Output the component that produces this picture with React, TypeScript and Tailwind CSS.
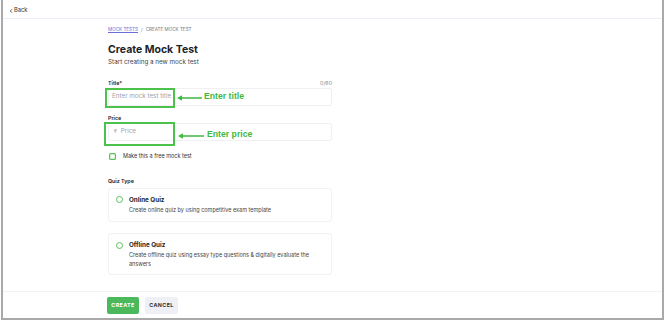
import { ChevronLeft } from "lucide-react"

const body = "font-['Inter',sans-serif]"

// green callout drawn over the form (page coordinates)
function Callout({ label, box, arrowY, arrowFrom, arrowTo, textX, textY }: {
  label: string
  box: [number, number, number, number]
  arrowY: number
  arrowFrom: number
  arrowTo: number
  textX: number
  textY: number
}) {
  const [x, y, w, h] = box
  return (
    <>
      <div className="absolute border-2 border-[#4cc24c]" style={{ left: x, top: y, width: w, height: h }} />
      <svg className="absolute" style={{ left: arrowFrom, top: arrowY - 4 }} width={arrowTo - arrowFrom} height={8}>
        <line x1={3} y1={4} x2={arrowTo - arrowFrom} y2={4} stroke="#3fb83f" strokeWidth={1.5} />
        <path d="M0 4 L5 1.2 L5 6.8 Z" fill="#3fb83f" />
      </svg>
      <span
        className="absolute font-['Liberation_Sans',Arial,sans-serif] font-bold text-[8.7px] leading-[10px] text-[#3fb83f] whitespace-nowrap"
        style={{ left: textX, top: textY - 5 }}
      >
        {label}
      </span>
    </>
  )
}

export default function App() {
  return (
    <div className={`relative w-[670px] h-[322px] bg-white ${body}`}>
      <div className="ml-px w-[663px] h-[320px] border-x-2 border-b-2 border-[#a9a9a9] flex flex-col">
        {/* Header */}
        <div className="h-[19px] shrink-0 border-b border-[#eceefa] flex items-center pt-[3px] pl-[5px] text-[5.8px] text-[#333]">
          <ChevronLeft className="w-[6px] h-[6px]" strokeWidth={3} />
          <span>Back</span>
        </div>

        {/* Content */}
        <div className="flex-1 pl-[105px]">
          <div className="w-[224px]">
            <div className="mt-[8px] flex items-center gap-[3px] text-[4.6px] leading-[6px] text-[#777]">
              <span className="text-[#6c6cd8] underline">MOCK TESTS</span>
              <span>/</span>
              <span>CREATE MOCK TEST</span>
            </div>
            <h1 className="mt-[10px] text-[10.5px] leading-[13px] font-bold text-[#1d1f2b]">Create Mock Test</h1>
            <p className="mt-[2px] text-[6.3px] leading-[8px] text-[#444]">Start creating a new mock test</p>

            <div className="mt-[14px] flex justify-between items-center text-[5.3px] leading-[6px]">
              <span className="font-semibold text-[#222]">Title*</span>
              <span className="text-[#888]">0/60</span>
            </div>
            <div className="mt-[2px] h-[18px] border border-[#f0f0f2] rounded-[2px] flex items-center pl-[3px] text-[6.3px] text-[#a0a0a8]">
              Enter mock test title
            </div>

            <div className="mt-[9px] text-[5.3px] leading-[6px] font-semibold text-[#222]">Price</div>
            <div className="mt-[2px] h-[18px] border border-[#f0f0f2] rounded-[2px] flex items-center pl-[5px] gap-[4px] text-[6.3px] text-[#a0a0a8]">
              <span className="text-[5px]">₹</span>
              <span>Price</span>
            </div>

            <div className="mt-[12px] flex items-center gap-[7px] pl-px">
              <svg width={7} height={7} className="shrink-0">
                <rect x={0.6} y={0.6} width={5.8} height={5.8} rx={1} fill="#f6fcf6" stroke="#5cc25c" strokeWidth={1.2} />
              </svg>
              <span className="text-[5.5px] leading-[7px] text-[#333]">Make this a free mock test</span>
            </div>

            <div className="mt-[18px] text-[5.3px] leading-[6px] font-semibold text-[#222]">Quiz Type</div>

            <div className="mt-[4px] h-[34px] border border-[#f2f2f4] rounded-[3px] flex items-start pl-[7px] pt-[7px] gap-[6px]">
              <div className="w-[7px] h-[7px] rounded-full border-[1.5px] border-[#5cc25c]" />
              <div>
                <div className="text-[6.3px] leading-[8px] font-bold text-[#1d1f2b]">Online Quiz</div>
                <div className="mt-[3px] text-[5.5px] leading-[7px] text-[#444]">Create online quiz by using competitive exam template</div>
              </div>
            </div>

            <div className="mt-[11px] h-[42px] border border-[#f2f2f4] rounded-[3px] flex items-start pl-[7px] pt-[7px] gap-[6px]">
              <div className="mt-[0.5px] w-[7px] h-[7px] rounded-full border-[1.5px] border-[#5cc25c]" />
              <div>
                <div className="text-[6.3px] leading-[8px] font-bold text-[#1d1f2b]">Offline Quiz</div>
                <div className="mt-[2px] w-[190px] text-[5.5px] leading-[8.5px] text-[#444]">Create offline quiz using essay type questions &amp; digitally evaluate the answers</div>
              </div>
            </div>
          </div>
        </div>

        {/* Footer */}
        <div className="h-[27px] shrink-0 border-t border-[#f2f2f4] flex items-start pt-[5px] pl-[104px] gap-[6px]">
          <button className="h-[17px] w-[32px] rounded-[2px] bg-[#4cb85c] text-white text-[5.3px] font-bold tracking-[0.4px]">CREATE</button>
          <button className="h-[17px] w-[33px] rounded-[2px] bg-[#eef0f6] text-[#333] text-[5.3px] font-bold tracking-[0.4px]">CANCEL</button>
        </div>
      </div>

      <Callout label="Enter title" box={[105, 88, 70, 20]} arrowY={98} arrowFrom={177} arrowTo={202} textX={204} textY={96} />
      <Callout label="Enter price" box={[104, 122, 71, 24]} arrowY={135.5} arrowFrom={178} arrowTo={204} textX={207} textY={134} />
    </div>
  )
}
